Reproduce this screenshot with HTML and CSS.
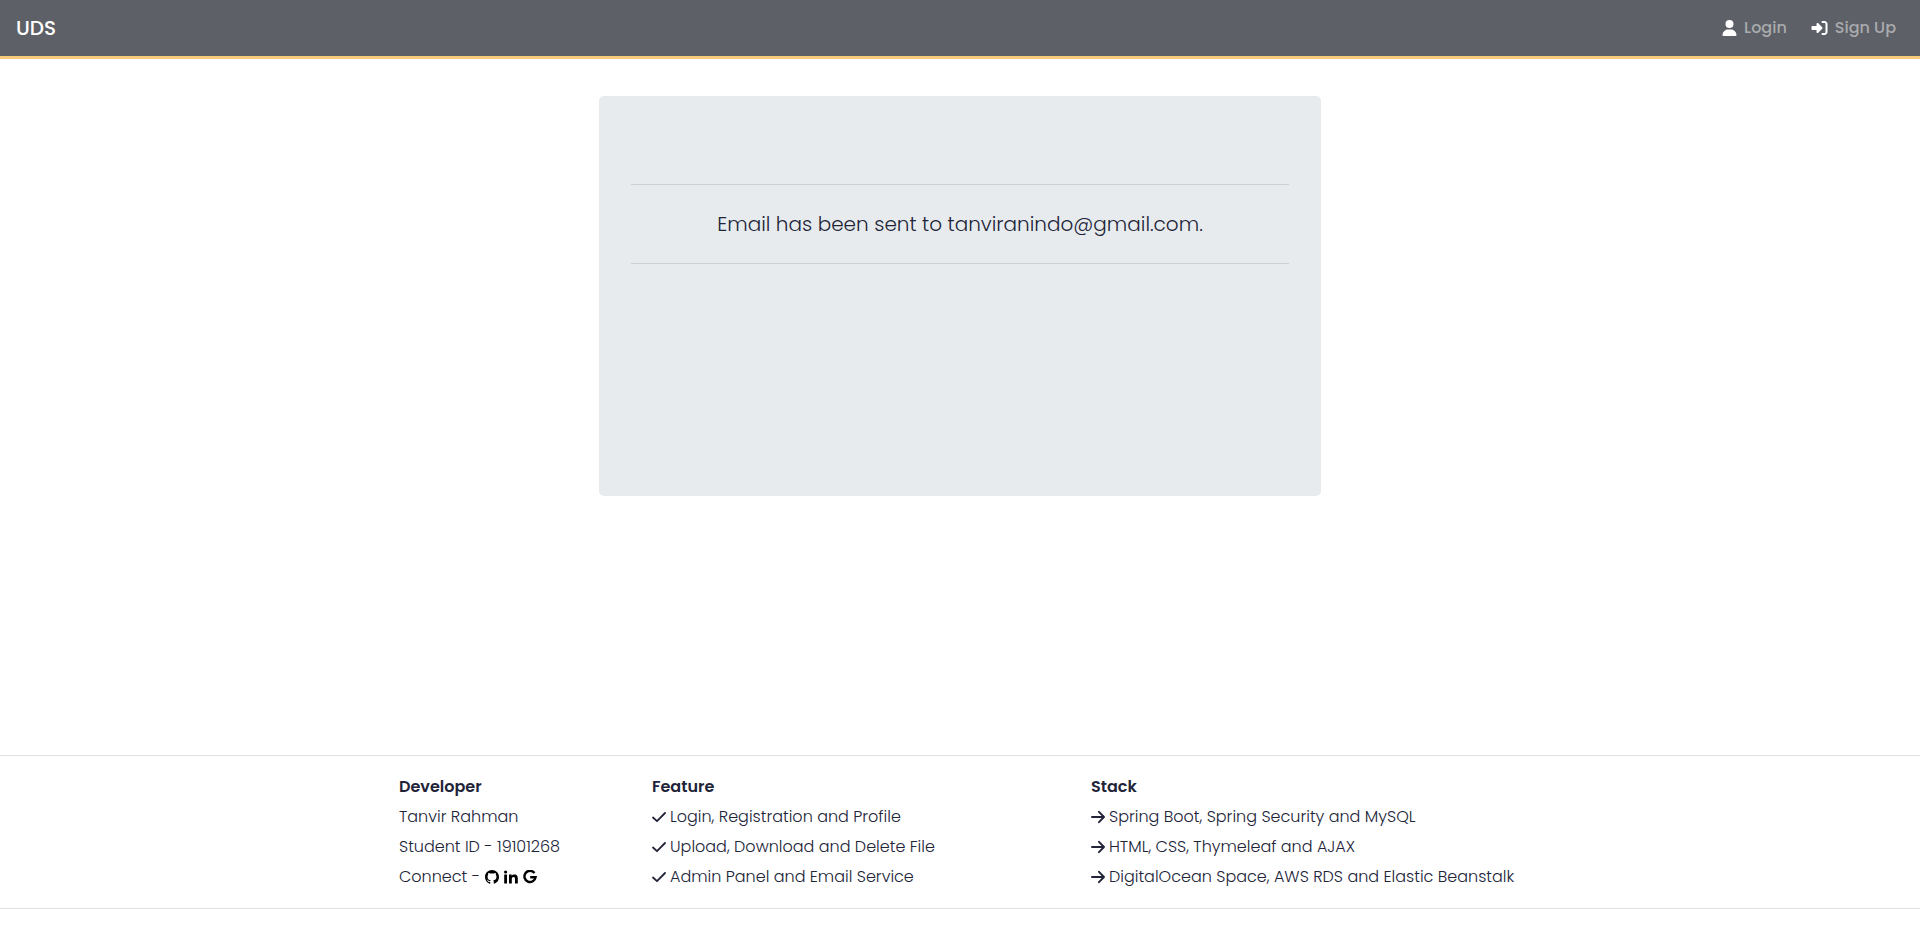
FILE: index.html
```html
<!DOCTYPE html>
<html lang="en">
<head>
<meta charset="utf-8">
<title>UDS</title>
<link rel="stylesheet" href="styles.css">
</head>
<body>
<svg class="sprite" aria-hidden="true">
  <symbol id="check" viewBox="0 0 14 14"><path d="M1 7.5 5 11.2 13 3" fill="none" stroke="currentColor" stroke-width="1.8" stroke-linecap="round" stroke-linejoin="round"/></symbol>
  <symbol id="arrow" viewBox="0 0 14 14"><path d="M1 7H13M8 1.8 13 7 8 12.2" fill="none" stroke="currentColor" stroke-width="1.9" stroke-linecap="round" stroke-linejoin="round"/></symbol>
</svg>
<header class="navbar">
  <a class="brand" href="#">UDS</a>
  <nav class="nav">
    <a class="nav-link" href="#">
      <svg class="nav-icon user" viewBox="0 0 448 512" aria-hidden="true"><path d="M224 256A128 128 0 1 0 224 0a128 128 0 1 0 0 256zm-45.700 48C79.800 304 0 383.800 0 482.300C0 498.700 13.300 512 29.700 512H418.300c16.400 0 29.700-13.300 29.700-29.700C448 383.800 368.200 304 269.700 304H178.300z"/></svg>
      <span>Login</span>
    </a>
    <a class="nav-link" href="#">
      <svg class="nav-icon" viewBox="0 0 512 512" aria-hidden="true"><path d="M217.900 105.900L340.700 228.700c7.200 7.200 11.300 17.100 11.300 27.300s-4.100 20.100-11.300 27.300L217.900 406.100c-6.400 6.400-15 9.900-24 9.900c-18.700 0-33.900-15.200-33.900-33.900l0-62.100L32 320c-17.700 0-32-14.300-32-32l0-64c0-17.700 14.300-32 32-32l128 0 0-62.100c0-18.700 15.200-33.900 33.900-33.900c9 0 17.600 3.600 24 9.900zM352 416l64 0c17.700 0 32-14.300 32-32l0-256c0-17.700-14.300-32-32-32l-64 0c-17.700 0-32-14.300-32-32s14.300-32 32-32l64 0c53 0 96 43 96 96l0 256c0 53-43 96-96 96l-64 0c-17.700 0-32-14.300-32-32s14.300-32 32-32z"/></svg>
      <span>Sign Up</span>
    </a>
  </nav>
</header>
<main class="main">
  <section class="card">
    <hr class="rule">
    <p class="lead">Email has been sent to tanviranindo@gmail.com.</p>
    <hr class="rule">
  </section>
</main>
<footer class="footer">
  <div class="footer-grid">
    <section>
      <h2 class="title">Developer</h2>
      <ul class="list">
        <li>Tanvir Rahman</li>
        <li>Student ID - 19101268</li>
        <li class="connect">Connect -
          <a href="#" aria-label="GitHub"><svg class="icon" viewBox="0 0 16 16" aria-hidden="true"><path d="M8 0C3.580 0 0 3.580 0 8c0 3.540 2.290 6.530 5.470 7.590.4.070.55-.17.55-.38 0-.19-.01-.82-.01-1.490-2.010.37-2.530-.49-2.690-.94-.09-.23-.48-.94-.82-1.130-.28-.15-.68-.52-.01-.53.63-.01 1.080.58 1.230.82.72 1.210 1.870.87 2.330.66.070-.52.28-.87.51-1.070-1.780-.2-3.640-.89-3.640-3.950 0-.87.31-1.590.82-2.150-.08-.2-.36-1.020.08-2.120 0 0 .67-.21 2.200.82.640-.18 1.320-.27 2-.27s1.360.09 2 .27c1.530-1.040 2.200-.82 2.200-.82.44 1.100.16 1.920.08 2.120.51.56.82 1.270.82 2.150 0 3.070-1.870 3.750-3.650 3.950.29.25.54.73.54 1.480 0 1.070-.01 1.930-.01 2.200 0 .21.15.46.55.38A8.010 8.010 0 0 0 16 8c0-4.420-3.580-8-8-8"/></svg></a>
          <a href="#" aria-label="LinkedIn"><svg class="icon" viewBox="0 0 14 14" aria-hidden="true"><path d="M.2 4.600H3V13.500H.2zM5 4.600h2.700v1.200c.5-.9 1.400-1.400 2.700-1.400 2.800 0 3.400 1.800 3.400 4.200v4.900H11V9.100c0-1.100 0-2.200-1.500-2.200s-1.700 1.100-1.700 2.200v4.400H5z"/><circle cx="1.600" cy="2" r="1.600"/></svg></a>
          <a href="#" aria-label="Google"><svg class="icon" viewBox="0 0 14 14" aria-hidden="true"><path d="M11.500 3A5.600 5.600 0 1 0 12.600 7.200H7.200" fill="none" stroke="currentColor" stroke-width="2.400"/></svg></a>
        </li>
      </ul>
    </section>
    <section>
      <h2 class="title">Feature</h2>
      <ul class="list">
        <li><svg class="icon"><use href="#check"/></svg>Login, Registration and Profile</li>
        <li><svg class="icon"><use href="#check"/></svg>Upload, Download and Delete File</li>
        <li><svg class="icon"><use href="#check"/></svg>Admin Panel and Email Service</li>
      </ul>
    </section>
    <section>
      <h2 class="title">Stack</h2>
      <ul class="list">
        <li><svg class="icon"><use href="#arrow"/></svg>Spring Boot, Spring Security and MySQL</li>
        <li><svg class="icon"><use href="#arrow"/></svg>HTML, CSS, Thymeleaf and AJAX</li>
        <li><svg class="icon"><use href="#arrow"/></svg>DigitalOcean Space, AWS RDS and Elastic Beanstalk</li>
      </ul>
    </section>
  </div>
</footer>
</body>
</html>
```
FILE: styles.css
```css
* { box-sizing: border-box; }
body {
  margin: 0;
  min-height: 100vh;
  padding-bottom: 20px;
  display: flex;
  flex-direction: column;
  background: #fff;
  color: #212438;
  font-family: Poppins, Inter, "Open Sans", sans-serif;
  font-size: 16px;
  font-weight: 300;
  line-height: 30px;
}
a { color: inherit; text-decoration: none; }
.sprite { display: none; }
.navbar {
  display: flex;
  justify-content: space-between;
  align-items: center;
  min-height: 59px;
  padding: 0 24px 0 16px;
  background: #5d6066;
  border-bottom: 3px solid #f8cb7c;
}
.brand { color: #fff; font-size: 20px; font-weight: 500; }
.nav { display: flex; gap: 24px; }
.nav-link {
  display: flex;
  align-items: center;
  gap: 7px;
  color: #a9abae;
  font-weight: 500;
}
.nav-icon { width: 17px; height: 16px; fill: #fff; }
.nav-icon.user { width: 15px; }
.main { flex: 1; padding: 37px 16px; }
.card {
  max-width: 722px;
  min-height: 400px;
  margin: 0 auto;
  padding: 64px 32px;
  border-radius: 5px;
  background: #e7ebee;
  display: flow-root;
}
.rule { margin: 24px 0; border: 0; border-top: 1px solid #ccd1d5; }
.lead { margin: 0; font-size: 20px; text-align: center; }
.footer {
  padding: 16px;
  border-top: 1px solid #e1e1e1;
  border-bottom: 1px solid #e1e1e1;
}
.footer-grid {
  display: grid;
  grid-template-columns: 253fr 439fr 430fr;
  max-width: 1122px;
  margin: 0 auto;
}
.title { margin: 0; font-size: 16px; font-weight: 600; line-height: 30px; }
.list { margin: 0; padding: 0; list-style: none; }
.list li { display: flex; align-items: center; gap: 4px; }
.list .connect { gap: 5px; }
.icon { width: 14px; height: 14px; display: block; fill: currentColor; }
.connect a { color: #000; }
```
